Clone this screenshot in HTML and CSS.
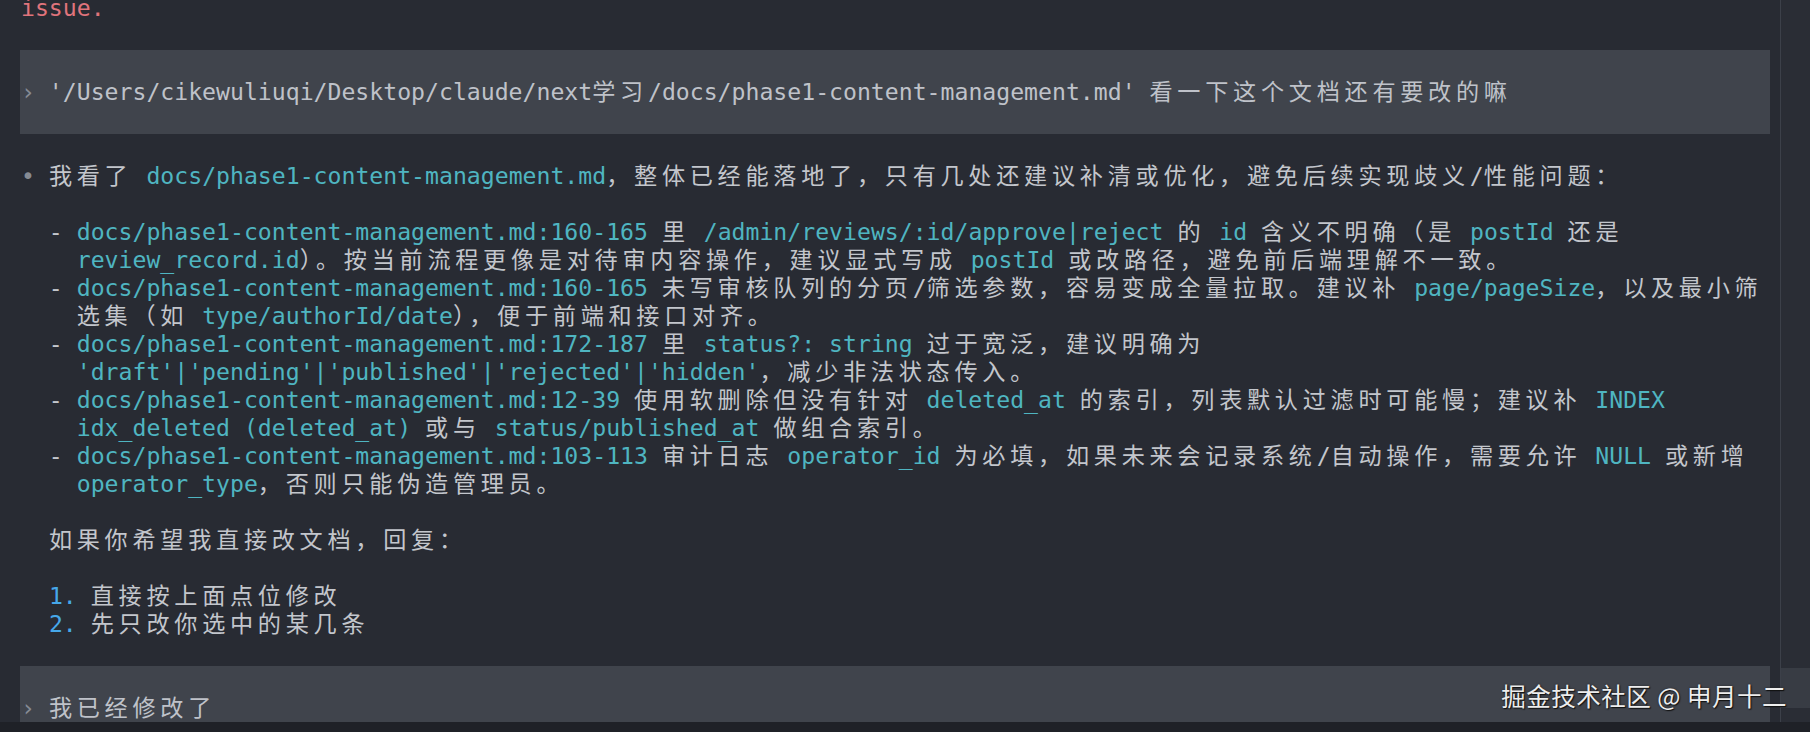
FILE: index.html
```html
<!DOCTYPE html>
<html lang="zh-CN">
<head>
<meta charset="utf-8">
<title>Terminal</title>
<link rel="stylesheet" href="styles.css">
</head>
<body>
<div class="window">
  <div class="pane">
    <div class="term">
      <div class="line"><span class="err">issue.</span></div>
      <div class="line"></div>
      <div class="prompt">
        <div class="line"></div>
        <div class="line"><span class="dim">›</span> '/Users/cikewuliuqi/Desktop/claude/next<span class="w">学习</span>/docs/phase1-content-management.md' <span class="w">看一下这个文档还有要改的嘛</span></div>
        <div class="line"></div>
      </div>
      <div class="line"></div>
      <div class="line"><span class="dim">•</span> <span class="w">我看了</span> <span class="code">docs/phase1-content-management.md</span><span class="w">，整体已经能落地了，只有几处还建议补清或优化，避免后续实现歧义</span>/<span class="w">性能问题：</span></div>
      <div class="line"></div>
      <div class="line">  - <span class="code">docs/phase1-content-management.md:160-165</span> <span class="w">里</span> <span class="code">/admin/reviews/:id/approve|reject</span> <span class="w">的</span> <span class="code">id</span> <span class="w">含义不明确（是</span> <span class="code">postId</span> <span class="w">还是</span></div>
      <div class="line">    <span class="code">review_record.id</span><span class="w">）。按当前流程更像是对待审内容操作，建议显式写成</span> <span class="code">postId</span> <span class="w">或改路径，避免前后端理解不一致。</span></div>
      <div class="line">  - <span class="code">docs/phase1-content-management.md:160-165</span> <span class="w">未写审核队列的分页</span>/<span class="w">筛选参数，容易变成全量拉取。建议补</span> <span class="code">page/pageSize</span><span class="w">，以及最小筛</span></div>
      <div class="line">    <span class="w">选集（如</span> <span class="code">type/authorId/date</span><span class="w">），便于前端和接口对齐。</span></div>
      <div class="line">  - <span class="code">docs/phase1-content-management.md:172-187</span> <span class="w">里</span> <span class="code">status?: string</span> <span class="w">过于宽泛，建议明确为</span></div>
      <div class="line">    <span class="code">'draft'|'pending'|'published'|'rejected'|'hidden'</span><span class="w">，减少非法状态传入。</span></div>
      <div class="line">  - <span class="code">docs/phase1-content-management.md:12-39</span> <span class="w">使用软删除但没有针对</span> <span class="code">deleted_at</span> <span class="w">的索引，列表默认过滤时可能慢；建议补</span> <span class="code">INDEX</span></div>
      <div class="line">    <span class="code">idx_deleted (deleted_at)</span> <span class="w">或与</span> <span class="code">status/published_at</span> <span class="w">做组合索引。</span></div>
      <div class="line">  - <span class="code">docs/phase1-content-management.md:103-113</span> <span class="w">审计日志</span> <span class="code">operator_id</span> <span class="w">为必填，如果未来会记录系统</span>/<span class="w">自动操作，需要允许</span> <span class="code">NULL</span> <span class="w">或新增</span></div>
      <div class="line">    <span class="code">operator_type</span><span class="w">，否则只能伪造管理员。</span></div>
      <div class="line"></div>
      <div class="line">  <span class="w">如果你希望我直接改文档，回复：</span></div>
      <div class="line"></div>
      <div class="line">  <span class="num">1.</span> <span class="w">直接按上面点位修改</span></div>
      <div class="line">  <span class="num">2.</span> <span class="w">先只改你选中的某几条</span></div>
      <div class="line"></div>
      <div class="prompt">
        <div class="line"></div>
        <div class="line"><span class="dim">›</span> <span class="w">我已经修改了</span></div>
        <div class="line"></div>
      </div>
    </div>
  </div>
  <div class="divider"></div>
  <div class="side">
    <div class="side-block"></div>
  </div>
</div>
<div class="dock"></div>
<div class="watermark">掘金技术社区 @ 申月十二</div>
</body>
</html>
```

FILE: styles.css
```css
html, body {
  margin: 0;
  padding: 0;
}
body {
  width: 1810px;
  height: 732px;
  overflow: hidden;
  background: #282b33;
  display: flex;
  flex-direction: column;
  position: relative;
}
.window {
  flex: 1;
  min-height: 0;
  display: flex;
}
.pane {
  flex: 1;
  min-width: 0;
  overflow: hidden;
  padding: 0 10px 0 20px;
}
.term {
  margin-top: -6px;
  font-family: "DejaVu Sans Mono", "Noto Sans CJK SC", monospace;
  font-size: 23.15px;
  line-height: 28px;
  color: #c3c6cc;
}
.line {
  height: 28px;
  white-space: pre;
  padding-left: 1px;
}
.prompt {
  background: #40444c;
  color: #bfc2c9;
}
.w {
  letter-spacing: 4.72px;
}
.dim {
  color: #868b94;
}
.err {
  color: #e0747c;
}
.code {
  color: #4fb5c1;
}
.num {
  color: #46a8ea;
}
.divider {
  width: 1px;
  background: #3c4049;
}
.side {
  width: 29px;
  background: #2a2d35;
}
.side-block {
  margin-top: 668px;
  height: 40px;
  background: #383c44;
}
.dock {
  height: 10px;
  background: #1f2127;
}
.watermark {
  position: absolute;
  right: 23px;
  top: 679px;
  font-family: "Noto Sans CJK SC", sans-serif;
  font-size: 24.5px;
  line-height: 34px;
  color: #ededed;
  text-shadow: 1px 1px 1px #111, 0 0 2px #222;
  letter-spacing: 0.5px;
}
```
